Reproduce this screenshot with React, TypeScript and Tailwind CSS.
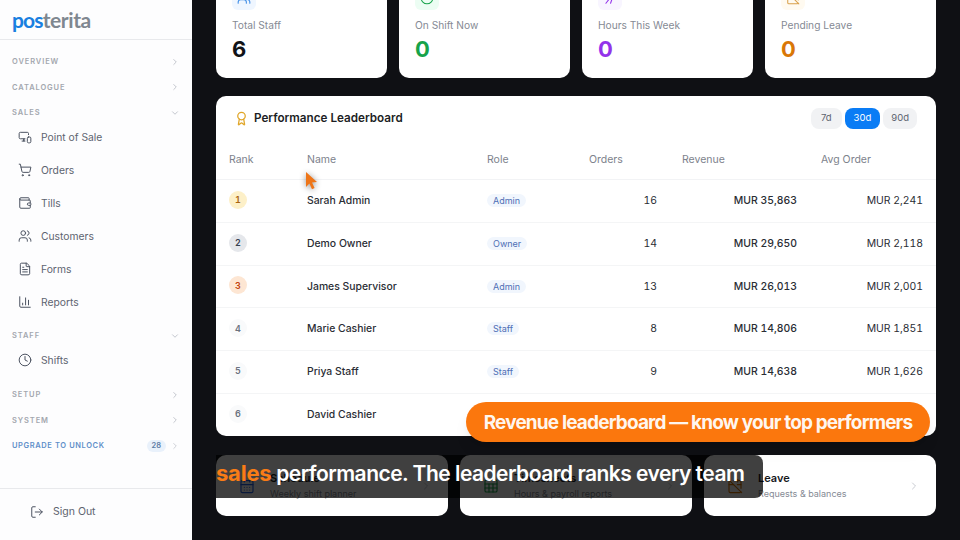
import React from 'react';
import {
  Award,
  BarChart3,
  CalendarDays,
  CalendarOff,
  ChevronDown,
  ChevronRight,
  Clock,
  FileText,
  LogOut,
  MonitorSmartphone,
  ShoppingCart,
  Sheet,
  Users,
  Wallet,
} from 'lucide-react';

const rows = [
  { rank: 1, name: 'Sarah Admin', role: 'Admin', orders: 16, revenue: 'MUR 35,863', avg: 'MUR 2,241', badge: 'bg-[#fdf0c8] text-[#a8650f]' },
  { rank: 2, name: 'Demo Owner', role: 'Owner', orders: 14, revenue: 'MUR 29,650', avg: 'MUR 2,118', badge: 'bg-[#e5e7eb] text-[#374151]' },
  { rank: 3, name: 'James Supervisor', role: 'Admin', orders: 13, revenue: 'MUR 26,013', avg: 'MUR 2,001', badge: 'bg-[#fde6d3] text-[#c2410c]' },
  { rank: 4, name: 'Marie Cashier', role: 'Staff', orders: 8, revenue: 'MUR 14,806', avg: 'MUR 1,851', badge: 'bg-[#f9fafb] text-[#6b7280]' },
  { rank: 5, name: 'Priya Staff', role: 'Staff', orders: 9, revenue: 'MUR 14,638', avg: 'MUR 1,626', badge: 'bg-[#f9fafb] text-[#6b7280]' },
  { rank: 6, name: 'David Cashier', role: 'Staff', orders: 7, revenue: 'MUR 13,012', avg: 'MUR 1,859', badge: 'bg-[#f9fafb] text-[#6b7280]' },
];

// only the foot of this icon shows above the fold
const HoursIcon = ({ className, strokeWidth }: { className?: string; strokeWidth?: number }) => (
  <svg className={className} viewBox="0 0 24 24" fill="none" stroke="currentColor" strokeWidth={strokeWidth} strokeLinecap="round">
    <path d="M3 12h18M5 21l7-9M13 21l3-9" />
  </svg>
);

const Section = ({ label, open }: { label: string; open?: boolean }) => (
  <div className="flex h-[25.6px] items-center justify-between pr-3 pl-3">
    <span className="text-[7.5px] font-semibold tracking-[0.12em] text-[#a3a7ae]">{label}</span>
    {open ? <ChevronDown className="h-2.5 w-2.5 text-[#b8bcc4]" /> : <ChevronRight className="h-2.5 w-2.5 text-[#b8bcc4]" />}
  </div>
);

const Item = ({ icon: Icon, label }: { icon: React.ElementType; label: string }) => (
  <div className="flex h-[33px] items-center gap-[9px] pl-[18px] text-[10.3px] text-[#5d6470]">
    <Icon className="h-[14px] w-[14px] text-[#4b5260]" strokeWidth={1.7} />
    <span>{label}</span>
  </div>
);

const Stat = ({ icon: Icon, label, value, tint, iconColor, color }: { icon: React.ElementType; label: string; value: string; tint: string; iconColor: string; color: string }) => (
  <div className="h-[108px] flex-1 rounded-[10px] bg-white p-4">
    <div className={`flex h-6 w-6 items-center justify-center rounded-md ${tint}`}>
      <Icon className={`h-[14px] w-[14px] ${iconColor}`} strokeWidth={1.8} />
    </div>
    <div className="mt-2 text-[10.2px] leading-[14px] text-[#858a94]">{label}</div>
    <div className={`mt-[3px] text-[22px] leading-[28px] font-bold ${color}`}>{value}</div>
  </div>
);

const Link = ({ icon: Icon, title, sub, color }: { icon: React.ElementType; title: string; sub: string; color: string }) => (
  <div className="flex h-[61px] flex-1 items-center gap-[15px] rounded-[10px] bg-white pr-4 pl-[23px]">
    <Icon className={`h-4 w-4 ${color}`} strokeWidth={1.7} />
    <div className="min-w-0 flex-1">
      <div className="text-[11px] leading-[14px] font-semibold text-[#17181c]">{title}</div>
      <div className="mt-[3px] text-[9px] leading-[12px] text-[#858a94]">{sub}</div>
    </div>
    <ChevronRight className="h-3 w-3 text-[#c9ccd2]" />
  </div>
);

const cols = 'grid grid-cols-[78px_180px_102px_93px_140px_127px] items-center';

export default function App() {
  return (
    <div className="relative flex h-[540px] w-[960px] overflow-hidden bg-[#0f1014] font-['Inter',sans-serif]">
      {/* Sidebar */}
      <aside className="flex w-[192px] shrink-0 flex-col bg-[#fdfdfe]">
        <div className="flex h-10 items-center border-b border-[#e8e9ec] pl-3">
          <span className="font-['Lato',sans-serif] text-[21px] leading-none font-bold">
            <span className="tracking-[-0.04em] text-[#1a7fe0]">pos</span>
            <span className="tracking-[-0.02em] text-[#7f8790]">terita</span>
          </span>
        </div>
        <nav className="flex-1 pt-[9px]">
          <Section label="OVERVIEW" />
          <Section label="CATALOGUE" />
          <Section label="SALES" open />
          <div className="-mt-[5px]">
            <Item icon={MonitorSmartphone} label="Point of Sale" />
            <Item icon={ShoppingCart} label="Orders" />
            <Item icon={Wallet} label="Tills" />
            <Item icon={Users} label="Customers" />
            <Item icon={FileText} label="Forms" />
            <Item icon={BarChart3} label="Reports" />
          </div>
          <div className="h-[4.5px]" />
          <Section label="STAFF" open />
          <div className="-mt-[5px]">
            <Item icon={Clock} label="Shifts" />
          </div>
          <div className="h-[5px]" />
          <Section label="SETUP" />
          <Section label="SYSTEM" />
          <div className="flex h-[25.6px] items-center justify-between pr-3 pl-3">
            <span className="text-[7.5px] font-semibold tracking-[0.08em] text-[#5f8fc9]">UPGRADE TO UNLOCK</span>
            <span className="flex items-center gap-[4px]">
              <span className="rounded-full bg-[#e9f1fb] px-[5px] text-[7.5px] leading-[12px] font-semibold text-[#5f7ea6]">28</span>
              <ChevronRight className="h-2.5 w-2.5 text-[#c4c8cf]" />
            </span>
          </div>
        </nav>
        <div className="flex h-[52px] items-center gap-[9px] border-t border-[#e8e9ec] pb-[6px] pl-[30px] text-[10.5px] text-[#5d6470]">
          <LogOut className="h-[14px] w-[14px] text-[#4b5260]" strokeWidth={1.7} />
          Sign Out
        </div>
      </aside>

      {/* Main */}
      <main className="flex-1 overflow-hidden px-6">
        <div className="-mt-[30px] flex flex-col">
          <div className="flex gap-3">
            <Stat icon={Users} label="Total Staff" value="6" tint="bg-[#eff6ff]" iconColor="text-[#3b8be6]" color="text-[#111318]" />
            <Stat icon={Clock} label="On Shift Now" value="0" tint="bg-[#ecfdf3]" iconColor="text-[#16a34a]" color="text-[#16a34a]" />
            <Stat icon={HoursIcon} label="Hours This Week" value="0" tint="bg-[#f8f5ff]" iconColor="text-[#9333ea]" color="text-[#9333ea]" />
            <Stat icon={CalendarOff} label="Pending Leave" value="0" tint="bg-[#fffaf0]" iconColor="text-[#d9a04a]" color="text-[#d97706]" />
          </div>

          <section className="mt-[18px] h-[340px] overflow-hidden rounded-[10px] bg-white">
            <div className="flex h-[44px] items-center justify-between pt-[1px] pr-[19px] pl-[18px]">
              <div className="flex items-center gap-[5px]">
                <Award className="h-[15px] w-[15px] text-[#e0a526]" strokeWidth={2} />
                <span className="text-[11.7px] font-semibold text-[#1c1e24]">Performance Leaderboard</span>
              </div>
              <div className="flex items-center gap-[3px] text-[9.5px]">
                <span className="rounded-lg bg-[#f1f2f4] px-[10px] py-[3px] text-[#5d6470]">7d</span>
                <span className="rounded-lg bg-[#0a7cf5] px-[9px] py-[3px] text-white">30d</span>
                <span className="rounded-lg bg-[#f1f2f4] px-[8px] py-[3px] text-[#5d6470]">90d</span>
              </div>
            </div>
            <div className={`${cols} h-10 border-b border-[#f2f3f5] text-[10.5px] text-[#7d828c]`}>
              <div className="pl-[13px]">Rank</div>
              <div className="pl-[13px]">Name</div>
              <div className="pl-[13px]">Role</div>
              <div className="pl-[13px]">Orders</div>
              <div className="pl-[13px]">Revenue</div>
              <div className="pl-[12px]">Avg Order</div>
            </div>
            {rows.map((r) => (
              <div key={r.rank} className={`${cols} h-[42.8px] border-b border-[#f4f5f6] text-[10.4px] text-[#2a2d34] tabular-nums`}>
                <div className="pl-[13px]">
                  <span className={`-mt-[2px] flex h-[18px] w-[18px] items-center justify-center rounded-full text-[9px] font-semibold ${r.badge}`}>{r.rank}</span>
                </div>
                <div className="pl-[13px] font-medium">{r.name}</div>
                <div className="pl-[13px]">
                  <span className="rounded-full bg-[#f1f6fd] px-[6px] py-[1px] text-[9px] text-[#4f6fb5]">{r.role}</span>
                </div>
                <div className="pr-3 text-right">{r.orders}</div>
                <div className="pr-3 text-right font-medium">{r.revenue}</div>
                <div className="pr-[13px] text-right">{r.avg}</div>
              </div>
            ))}
          </section>

          <div className="mt-[19px] flex gap-3">
            <Link icon={CalendarDays} title="Schedule" sub="Weekly shift planner" color="text-[#2563eb]" />
            <Link icon={Sheet} title="Timesheets" sub="Hours & payroll reports" color="text-[#16a34a]" />
            <Link icon={CalendarOff} title="Leave" sub="Requests & balances" color="text-[#d97706]" />
          </div>
        </div>
      </main>

      {/* Video overlays */}
      <div className="absolute top-[402px] left-[466px] flex h-10 w-[464px] items-center justify-center rounded-full bg-[#fb770d] pt-[2px] text-[19px] font-bold tracking-[-0.045em] whitespace-nowrap text-white/95 shadow-lg">
        Revenue leaderboard — know your top performers
      </div>
      <div className="absolute top-[455px] left-[216px] flex h-[43px] w-[547px] items-center rounded-r-lg bg-black/75 pb-[6px] text-[21px] font-semibold tracking-[-0.025em] whitespace-nowrap text-white">
        <span className="text-[22px] font-bold tracking-[-0.01em] text-[#f97c16]">sales</span>&nbsp;performance. The leaderboard ranks every team
      </div>
      <svg className="absolute top-[171px] left-[304px] h-[19px] w-[15px] drop-shadow-[0_1px_3px_rgba(0,0,0,0.45)]" viewBox="0 0 15 19">
        <path d="M2 1l11 10-5 .6 2.6 5.4-2.6 1.2L5.4 12.6 2 16z" fill="#ee7518" />
      </svg>
    </div>
  );
}
